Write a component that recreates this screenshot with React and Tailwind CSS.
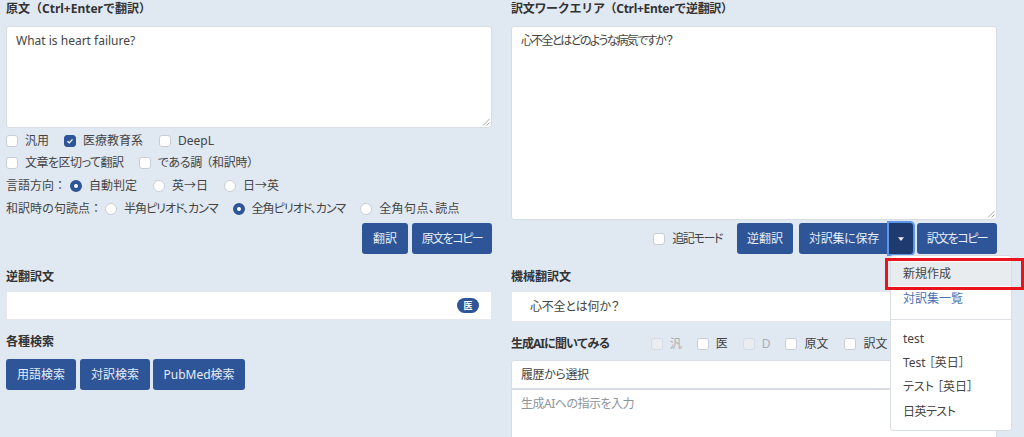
import { ChevronDown } from 'lucide-react';

const fontStack = "font-['Noto_Sans','Noto_Sans_CJK_JP',sans-serif] [font-feature-settings:'palt']";
const fullWidth = '[font-feature-settings:normal]';

function Check({ label, checked, disabled, className = '', textClass = '' }) {
    return (
        <label className={`flex items-center gap-[7px] ${disabled ? 'text-[#a9adb3]' : ''} ${className}`}>
            <span className={`flex h-[12px] w-[12px] items-center justify-center rounded-[3px] border ${checked ? 'border-[#2d5597] bg-[#2d5597]' : disabled ? 'border-[#d5dbe3] bg-[#e9edf2]' : 'border-[#c9ced6] bg-white'}`}>
                {checked && (
                    <svg viewBox="0 0 12 12" className="h-[10px] w-[10px]" fill="none" stroke="white" strokeWidth="1.6">
                        <path d="M3 6.2l2.1 2L9 4" />
                    </svg>
                )}
            </span>
            <span className={textClass}>{label}</span>
        </label>
    );
}

function Radio({ label, checked, className = '', textClass = '' }) {
    return (
        <label className={`flex items-center gap-[7px] ${className}`}>
            <span className={`h-[12px] w-[12px] rounded-full ${checked ? 'border-[4px] border-[#2d5597] bg-white' : 'border border-[#c9ced6] bg-white'}`} />
            <span className={textClass}>{label}</span>
        </label>
    );
}

function Btn({ children, className = '' }) {
    return (
        <button className={`flex h-[31px] shrink-0 items-center justify-center rounded-[3px] bg-[#2d5597] text-[12px] text-[#e8edf5] ${className}`}>
            {children}
        </button>
    );
}

function Label({ children, className = '' }) {
    return <div className={`shrink-0 text-[12px] leading-[18px] font-bold text-[#333] ${fullWidth} ${className}`}>{children}</div>;
}

function Resize() {
    return (
        <svg viewBox="0 0 8 8" className="absolute right-[1px] bottom-[1px] h-[8px] w-[8px]" stroke="#8a8f96" strokeWidth="0.8">
            <path d="M7.5 1L1 7.5M7.5 4.5L4.5 7.5" />
        </svg>
    );
}

export default function App() {
    return (
        <div className={`relative flex h-[437px] w-[1024px] gap-[19px] overflow-hidden bg-[#e0e8f2] pt-[1px] pl-[6px] text-[12px] text-[#444] ${fontStack}`}>
            {/* Left column */}
            <div className="flex w-[486px] shrink-0 flex-col">
                <Label className="mt-[-1px]">原文（Ctrl+Enterで翻訳）</Label>
                <div className="relative mt-[8px] h-[102px] shrink-0 rounded-[3px] border border-[#d8dde4] bg-white px-[9px] py-[5px] text-[12px] leading-[18px]">
                    What is heart failure?
                    <Resize />
                </div>
                <div className="mt-[6px] flex h-[14px] shrink-0 items-center">
                    <Check label="汎用" className="mr-[15px]" />
                    <Check label="医療教育系" checked className="mr-[16px]" />
                    <Check label="DeepL" />
                </div>
                <div className="mt-[8px] flex h-[14px] shrink-0 items-center">
                    <Check label="文章を区切って翻訳" className="mr-[15px]" textClass="tracking-[-0.5px]" />
                    <Check label={<>である調<span className="ml-[4px]">（和訳時）</span></>} className="gap-[5px]" textClass="tracking-[-0.2px]" />
                </div>
                <div className="mt-[9px] flex h-[14px] shrink-0 items-center">
                    <span className={`mr-[4px] ${fullWidth}`}>言語方向：</span>
                    <Radio label="自動判定" checked className="mr-[16px]" />
                    <Radio label="英→日" className="mr-[16px]" />
                    <Radio label="日→英" />
                </div>
                <div className="mt-[9px] flex h-[14px] shrink-0 items-center">
                    <span className={`mr-[3px] ${fullWidth}`}>和訳時の句読点：</span>
                    <Radio label="半角ピリオド、カンマ" className="mr-[15px]" textClass="tracking-[-1px]" />
                    <Radio label="全角ピリオド、カンマ" checked className="mr-[15px]" textClass="tracking-[-1px]" />
                    <Radio label="全角句点、読点" textClass="tracking-[0.4px]" />
                </div>
                <div className="mt-[7px] flex shrink-0 justify-end gap-[4px]">
                    <Btn className="w-[46px]">翻訳</Btn>
                    <Btn className="w-[80px] tracking-[-1.5px]">原文をコピー</Btn>
                </div>
                <Label className="mt-[14px]">逆翻訳文</Label>
                <div className="mt-[5px] flex h-[29px] shrink-0 items-center justify-end border border-[#e4e8ee] bg-white pr-[12px]">
                    <span className="flex h-[15px] w-[22px] items-center justify-center rounded-full bg-[#2d5597] text-[9px] font-bold text-white">医</span>
                </div>
                <Label className="mt-[13px]">各種検索</Label>
                <div className="mt-[8px] flex shrink-0">
                    <Btn className="mr-[4px] w-[70px]">用語検索</Btn>
                    <Btn className="mr-[3px] w-[70px]">対訳検索</Btn>
                    <Btn className="w-[92px]">PubMed検索</Btn>
                </div>
            </div>

            {/* Right column */}
            <div className="flex w-[486px] shrink-0 flex-col">
                <Label className="mt-[-1px] tracking-[-0.3px]">訳文ワークエリア（Ctrl+Enterで逆翻訳）</Label>
                <div className="relative mt-[8px] h-[194px] shrink-0 rounded-[3px] border border-[#d8dde4] bg-white px-[9px] py-[5px] text-[12px] leading-[18px] tracking-[-1.8px]">
                    心不全とはどのような病気ですか？
                    <Resize />
                </div>
                <div className="mt-[3px] flex shrink-0 items-center justify-end">
                    <Check label="追記モード" className="mr-[15px]" textClass="tracking-[-1.4px]" />
                    <Btn className="mr-[6px] w-[56px]">逆翻訳</Btn>
                    <Btn className="w-[90px] rounded-r-none tracking-[-0.3px]">対訳集に保存</Btn>
                    <button className="flex h-[31px] w-[24px] shrink-0 items-center justify-center rounded-r-[3px] bg-[#1e3a6e] ring-2 ring-[#5b97e6]">
                        <svg viewBox="0 0 8 5" className="h-[4px] w-[6px]" fill="#e8edf5">
                            <path d="M0 0h8L4 5z" />
                        </svg>
                    </button>
                    <Btn className="ml-[4px] w-[80px] tracking-[-1.5px]">訳文をコピー</Btn>
                </div>
                <Label className="mt-[14px]">機械翻訳文</Label>
                <div className="mt-[5px] flex h-[31px] shrink-0 items-center border border-[#e4e8ee] bg-white pl-[18px] text-[12px] tracking-[-0.2px]">
                    心不全とは何か？
                </div>
                <div className="mt-[13px] flex h-[18px] shrink-0 items-center">
                    <Label className="mr-[41px] tracking-[-1px]">生成AIに聞いてみる</Label>
                    <Check label="汎" disabled className="mr-[15px]" />
                    <Check label="医" className="mr-[15px]" />
                    <Check label="D" disabled className="mr-[15px]" />
                    <Check label="原文" className="mr-[16px]" />
                    <Check label="訳文" />
                </div>
                <div className="mt-[7px] flex h-[29px] shrink-0 items-center justify-between rounded-t-[3px] border border-[#d8dde4] bg-white px-[9px] text-[12px] tracking-[-0.4px]">
                    履歴から選択
                    <ChevronDown className="h-3 w-3" />
                </div>
                <div className="h-[60px] shrink-0 border border-[#d8dde4] bg-white px-[9px] py-[5px] text-[12px] tracking-[-0.5px] text-[#8d949c]">
                    生成AIへの指示を入力
                </div>
            </div>

            {/* Dropdown */}
            <div className="absolute top-[255px] left-[890px] w-[122px] rounded-[3px] border border-[#d8dde4] bg-white pt-[6px] pb-[6px] text-[12px]">
                <div className="flex h-[24px] items-center bg-[#e9ecef] pl-[12px]">新規作成</div>
                <div className="flex h-[26px] items-center pl-[12px] text-[#4a72b5]">対訳集一覧</div>
                <div className="my-[7px] h-px bg-[#dcdfe3]" />
                <div className="flex h-[24px] items-center pl-[12px]">test</div>
                <div className="flex h-[24px] items-center pl-[12px]"><span>Test</span><span className="ml-[3px]">［英日］</span></div>
                <div className="flex h-[24px] items-center pl-[12px]"><span>テスト</span><span className="ml-[3px]">［英日］</span></div>
                <div className="flex h-[25px] items-center pl-[12px] tracking-[-0.5px]">日英テスト</div>
            </div>
            {/* Red highlight */}
            <div className="absolute top-[258px] left-[885px] h-[32px] w-[139px] border-[3px] border-[#e8141c]" />
        </div>
    );
}
